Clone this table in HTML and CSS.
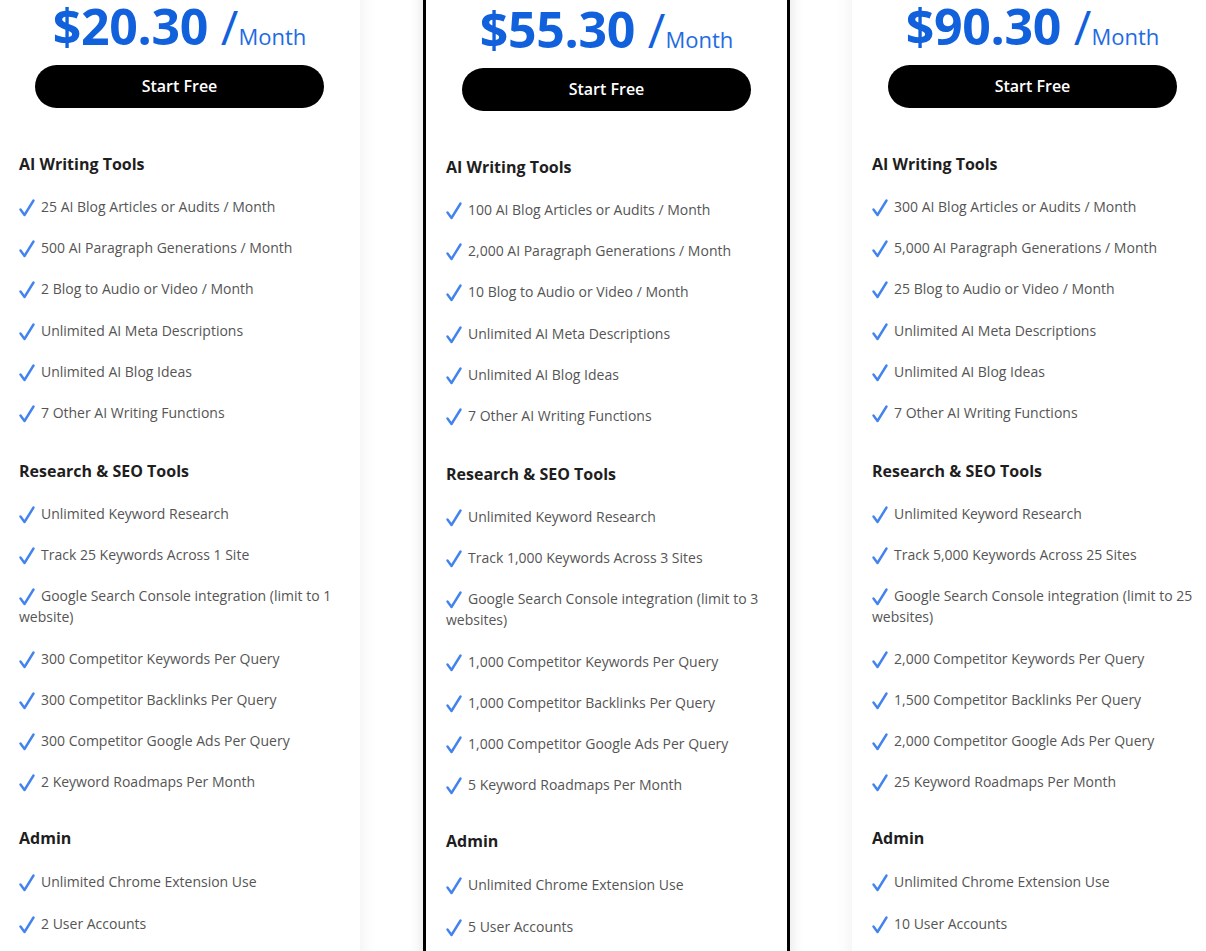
FILE: index.html
```html
<!DOCTYPE html>
<html lang="en">
<head>
    <meta charset="UTF-8">
    <meta name="viewport" content="width=device-width, initial-scale=1.0">
    <title>Pricing</title>
<link rel="stylesheet" href="styles.css">
</head>
<body>

<div class="plans" id="plans"></div>

<script>
// plan data
let plans = [
    {
        price: "$20.30",
        featured: false,
        writing: ["25 AI Blog Articles or Audits / Month", "500 AI Paragraph Generations / Month", "2 Blog to Audio or Video / Month", "Unlimited AI Meta Descriptions", "Unlimited AI Blog Ideas", "7 Other AI Writing Functions"],
        seo: ["Unlimited Keyword Research", "Track 25 Keywords Across 1 Site", "Google Search Console integration (limit to 1 website)", "300 Competitor Keywords Per Query", "300 Competitor Backlinks Per Query", "300 Competitor Google Ads Per Query", "2 Keyword Roadmaps Per Month"],
        admin: ["Unlimited Chrome Extension Use", "2 User Accounts"]
    },
    {
        price: "$55.30",
        featured: true,
        writing: ["100 AI Blog Articles or Audits / Month", "2,000 AI Paragraph Generations / Month", "10 Blog to Audio or Video / Month", "Unlimited AI Meta Descriptions", "Unlimited AI Blog Ideas", "7 Other AI Writing Functions"],
        seo: ["Unlimited Keyword Research", "Track 1,000 Keywords Across 3 Sites", "Google Search Console integration (limit to 3 websites)", "1,000 Competitor Keywords Per Query", "1,000 Competitor Backlinks Per Query", "1,000 Competitor Google Ads Per Query", "5 Keyword Roadmaps Per Month"],
        admin: ["Unlimited Chrome Extension Use", "5 User Accounts"]
    },
    {
        price: "$90.30",
        featured: false,
        writing: ["300 AI Blog Articles or Audits / Month", "5,000 AI Paragraph Generations / Month", "25 Blog to Audio or Video / Month", "Unlimited AI Meta Descriptions", "Unlimited AI Blog Ideas", "7 Other AI Writing Functions"],
        seo: ["Unlimited Keyword Research", "Track 5,000 Keywords Across 25 Sites", "Google Search Console integration (limit to 25 websites)", "2,000 Competitor Keywords Per Query", "1,500 Competitor Backlinks Per Query", "2,000 Competitor Google Ads Per Query", "25 Keyword Roadmaps Per Month"],
        admin: ["Unlimited Chrome Extension Use", "10 User Accounts"]
    }
];

let check = `<svg class="check" width="16" height="18" viewBox="0 0 16 18"><path d="M1.5 10.5 L5.5 16 L14.5 1.5" fill="none" stroke="#4283ee" stroke-width="2.4" stroke-linecap="round" stroke-linejoin="round"/></svg>`;

function renderList(items) {
    return `<ul class="features">` + items.map(item => `<li>${check}${item}</li>`).join("") + `</ul>`;
}

function renderPlans() {
    let container = document.getElementById("plans");
    plans.map((plan) => {
        let card = document.createElement("div");
        card.classList.add("plan");
        if (plan.featured) card.classList.add("featured");

        card.innerHTML = `
            <div class="price"><span class="amount">${plan.price} </span><span class="slash">/</span><span class="per">Month</span></div>
            <a href="#" class="start-btn">Start Free</a>
            <h3 class="first">AI Writing Tools</h3>
            ${renderList(plan.writing)}
            <h3>Research &amp; SEO Tools</h3>
            ${renderList(plan.seo)}
            <h3 class="admin">Admin</h3>
            ${renderList(plan.admin)}
        `;
        container.append(card);
    });
}

renderPlans();
</script>

</body>
</html>
```

FILE: styles.css
```css
/* Reset */
* {
    padding: 0;
    margin: 0;
    box-sizing: border-box;
}

body {
    font-family: "Open Sans", Arial, sans-serif;
    background-color: #fff;
    color: #333;
    overflow: hidden;
}

/* Cards row */
.plans {
    display: flex;
    align-items: flex-start;
    gap: 62px;
    margin-left: -1px;
    margin-top: -21px;
}

.plan {
    flex: 0 0 361px;
    width: 361px;
    padding: 20px 20px 40px;
    background-color: #fff;
    box-shadow: 0 0 18px rgba(0, 0, 0, 0.07);
}

.plan.featured {
    flex-basis: 367px;
    width: 367px;
    margin-left: 1px;
    border: 3px solid #000;
    border-bottom: none;
    box-shadow: 0 0 14px rgba(0, 0, 0, 0.12);
}

/* Price */
.price {
    text-align: center;
    color: #1261dc;
    white-space: nowrap;
    line-height: 54px;
    height: 54px;
    margin-bottom: 12px;
}

.price .amount {
    font-size: 50px;
    font-weight: 700;
    letter-spacing: -0.3px;
}

.price .slash {
    font-size: 48px;
    font-weight: 400;
}

.price .per {
    font-size: 22px;
    font-weight: 400;
    color: #1e6be3;
}

/* Button */
.start-btn {
    display: block;
    width: 289px;
    height: 43px;
    margin: 0 auto;
    line-height: 43px;
    border-radius: 22px;
    background-color: #000;
    color: #fff;
    text-align: center;
    text-decoration: none;
    font-size: 16px;
    font-weight: 600;
}

/* Section headings */
.plan h3 {
    font-size: 16px;
    font-weight: 700;
    color: #1e1e1e;
    line-height: 22px;
    margin-top: 37px;
    margin-bottom: 21px;
}

.plan h3.first {
    margin-top: 45px;
}

.plan h3.admin {
    margin-top: 35px;
    margin-bottom: 22px;
}

/* Feature list */
.features {
    list-style: none;
}

.features li {
    font-size: 14px;
    line-height: 21px;
    color: #555;
    margin-bottom: 20.2px;
}

.plan h3.admin + .features li {
    margin-bottom: 21px;
}

.features li:last-child {
    margin-bottom: 0;
}

.check {
    display: inline-block;
    vertical-align: -5px;
    margin-right: 6px;
}
```
